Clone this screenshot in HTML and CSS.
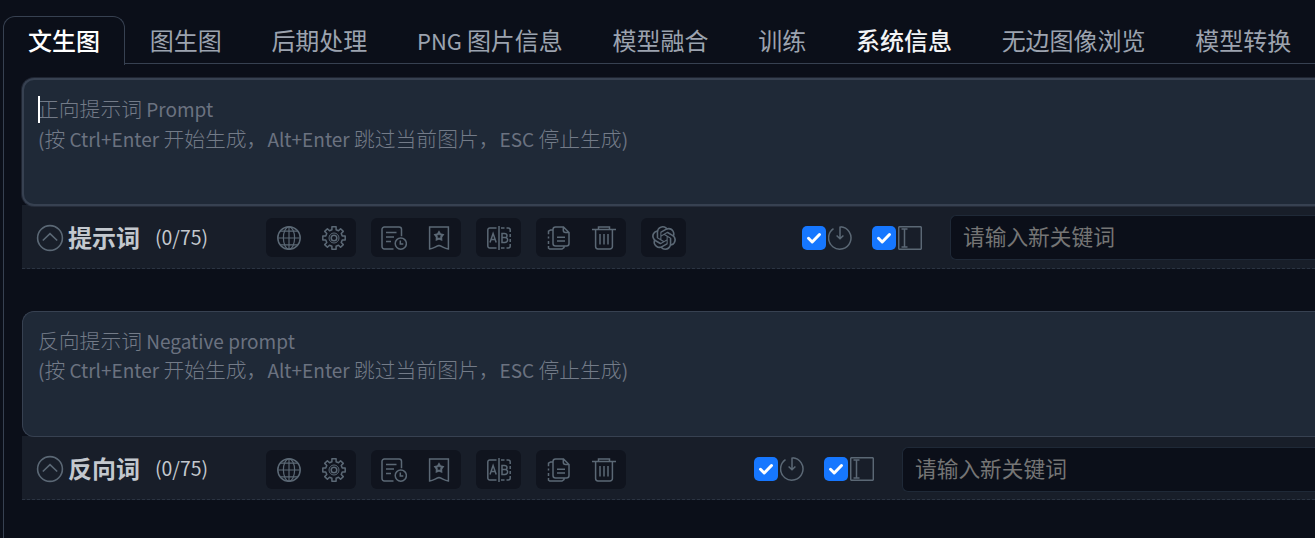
FILE: index.html
```html
<!DOCTYPE html>
<html lang="zh-CN">
<head>
    <meta charset="utf-8">
    <title>文生图</title>
    <link rel="stylesheet" href="styles.css">
</head>
<body>
<!-- 图标 -->
<svg class="icon-defs" xmlns="http://www.w3.org/2000/svg">
    <symbol id="i-fold" viewBox="0 0 28 28"><circle cx="14" cy="14" r="12.4"/><path d="M6.8 16.5L14 9.6l7.2 6.9"/></symbol>
    <symbol id="i-globe" viewBox="0 0 24 24"><circle cx="12" cy="12" r="11.2"/><path d="M12 .8v22.4M.8 12h22.4M3.4 5.2h17.2M3.4 18.8h17.2" stroke-width="1.2"/><ellipse cx="12" cy="12" rx="5.6" ry="11.2" stroke-width="1.2"/></symbol>
    <symbol id="i-gear" viewBox="0 0 24 24"><path d="M9.9.8h4.2v3l2.4 1 2.1-2.1 2.7 2.7-2.1 2.1 1 2.4h3v4.2h-3l-1 2.4 2.1 2.1-2.7 2.7-2.1-2.1-2.4 1v3H9.9v-3l-2.4-1-2.1 2.1-2.7-2.7 2.1-2.1-1-2.4h-3V9.9h3l1-2.4-2.1-2.1 2.7-2.7 2.1 2.1 2.4-1z" stroke-linejoin="round"/><circle cx="12" cy="12" r="5" stroke-width="1"/><circle cx="12" cy="12" r="2.8"/></symbol>
    <symbol id="i-history" viewBox="0 0 26 24"><path d="M12.5 22.9H3.3a2.3 2.3 0 0 1-2.3-2.3V3.3A2.3 2.3 0 0 1 3.3 1h14.900a2.300 2.300 0 0 1 2.300 2.300v7M5 6.500h10.500M5 11h8M5 15.500h5"/><circle cx="19.800" cy="17.600" r="5.600"/><path d="M19.300 14.500v3.600h3"/></symbol>
    <symbol id="i-favorite" viewBox="0 0 24 24"><path d="M2.6 1h18.8v22c-4-.4-6-2.6-9.4-3.4-3.4.8-5.4 3-9.4 3.4z"/><path d="M12 6.200l1.200 2.100 2.500.6-1.500 2 .1 2.500-2.300-.9-2.300.9.1-2.500-1.500-2 2.500-.6z" stroke-width="2"/></symbol>
    <symbol id="i-ab" viewBox="0 0 24 24"><path d="M9.5 2H2.8A2 2 0 0 0 .8 4v16a2 2 0 0 0 2 2h6.7M12 0v24"/><path d="M14 2h3.5M19.5 2h1.7a2 2 0 0 1 2 2v2M23.2 8v3M23.2 13v3M23.2 18v2a2 2 0 0 1-2 2h-1.7M14 22h3.5"/><path d="M3 16.5l3.1-9 3.1 9M4.1 13.4h4M15 7.6v8.8h2.7c3.8 0 3.8-4.8.4-4.8H15h2.7c3.3 0 3-4-.3-4z"/></symbol>
    <symbol id="i-copy" viewBox="0 0 24 24"><path d="M8.5 1h8L22 6.5v11a2.5 2.5 0 0 1-2.5 2.500h-11A2.500 2.500 0 0 1 6 17.500v-14A2.500 2.500 0 0 1 8.500 1zM16.300 1v3.300A2.200 2.200 0 0 0 18.500 6.500H22M10 11.300h8M10 15h8"/><path d="M6 4H3.500L1.500 5.200v3M1.500 10.500v2M1.500 15v3M1.500 20v2.200l1.200.8H15l2-1.500V20"/></symbol>
    <symbol id="i-trash" viewBox="0 0 24 24"><path d="M0 3.600h24M6.500 3.400V1h11v2.400M3.600 4v16.500A2.400 2.400 0 0 0 6 22.900h12a2.400 2.400 0 0 0 2.400-2.400V4M8 8v10.500M12 8v10.500M16 8v10.500"/></symbol>
    <symbol id="i-openai" viewBox="0 0 24 24"><path class="solid" d="M22.282 9.821a5.985 5.985 0 0 0-.516-4.910 6.046 6.046 0 0 0-6.510-2.900A6.065 6.065 0 0 0 4.981 4.182a5.985 5.985 0 0 0-3.998 2.900 6.046 6.046 0 0 0 .743 7.097 5.980 5.980 0 0 0 .511 4.911 6.051 6.051 0 0 0 6.515 2.900A5.985 5.985 0 0 0 13.260 24a6.056 6.056 0 0 0 5.772-4.206 5.990 5.990 0 0 0 3.998-2.900 6.056 6.056 0 0 0-.748-7.073zM13.260 22.430a4.476 4.476 0 0 1-2.877-1.040l.142-.081 4.779-2.758a.795.795 0 0 0 .392-.681v-6.737l2.020 1.169a.071.071 0 0 1 .038.052v5.583a4.504 4.504 0 0 1-4.494 4.493zM3.600 18.304a4.471 4.471 0 0 1-.535-3.014l.142.085 4.783 2.759a.771.771 0 0 0 .781 0l5.843-3.369v2.332a.080.080 0 0 1-.033.062L9.740 19.950a4.500 4.500 0 0 1-6.140-1.646zM2.341 7.896a4.485 4.485 0 0 1 2.366-1.973V11.600a.766.766 0 0 0 .388.677l5.814 3.354-2.020 1.169a.076.076 0 0 1-.071 0l-4.830-2.787A4.504 4.504 0 0 1 2.341 7.896zm16.596 3.856l-5.833-3.388 2.015-1.164a.076.076 0 0 1 .071 0l4.830 2.791a4.494 4.494 0 0 1-.676 8.105v-5.678a.790.790 0 0 0-.407-.666zm2.010-3.023l-.142-.085-4.773-2.782a.776.776 0 0 0-.785 0L9.409 9.230V6.897a.066.066 0 0 1 .028-.061l4.830-2.787a4.499 4.499 0 0 1 6.680 4.660zm-12.640 4.135l-2.020-1.164a.080.080 0 0 1-.038-.057V6.075a4.499 4.499 0 0 1 7.376-3.454l-.142.081-4.778 2.758a.795.795 0 0 0-.393.681zm1.097-2.366l2.602-1.500 2.607 1.500v2.999l-2.597 1.500-2.607-1.500z"/></symbol>
    <symbol id="i-import" viewBox="0 0 24 24"><path d="M5.500 2.700a11.200 11.200 0 1 0 7-1.900M12 .5v12M8.600 9.500l3.400 3.300 3.400-3.300"/></symbol>
    <symbol id="i-cursor" viewBox="0 0 24 24"><rect x=".7" y=".7" width="22.600" height="22.600" rx="1"/><path d="M3.500 3h6M3.500 21h6M6.500 3v18"/></symbol>
    <symbol id="i-check" viewBox="0 0 24 24"><path d="M6.500 12.300l3.700 3.700 7.300-7.500"/></symbol>
</svg>

<div class="tabs">
    <div class="tab selected">文生图</div>
    <div class="tab">图生图</div>
    <div class="tab">后期处理</div>
    <div class="tab"><span class="en">PNG </span>图片信息</div>
    <div class="tab">模型融合</div>
    <div class="tab">训练</div>
    <div class="tab strong">系统信息</div>
    <div class="tab">无边图像浏览</div>
    <div class="tab">模型转换</div>
</div>

<div class="tab-panel">
    <div class="prompt focus">
        <div class="textarea"><i class="caret"></i>正向提示词<span class="en"> Prompt</span><br><span class="en">(</span>按<span class="en"> Ctrl+Enter </span>开始生成，<span class="en">Alt+Enter </span>跳过当前图片，<span class="en">ESC </span>停止生成<span class="en">)</span></div>
        <div class="toolbar">
            <svg class="fold"><use href="#i-fold"/></svg>
            <div class="title">提示词</div>
            <div class="counter">(0/75)</div>
            <div class="groups">
                <div class="group"><span><svg><use href="#i-globe"/></svg></span><span><svg><use href="#i-gear"/></svg></span></div>
                <div class="group"><span><svg class="wide"><use href="#i-history"/></svg></span><span><svg><use href="#i-favorite"/></svg></span></div>
                <div class="group"><span><svg><use href="#i-ab"/></svg></span></div>
                <div class="group"><span><svg><use href="#i-copy"/></svg></span><span><svg><use href="#i-trash"/></svg></span></div>
                <div class="group"><span><svg><use href="#i-openai"/></svg></span></div>
            </div>
            <div class="options">
                <div class="option"><svg class="checkbox"><use href="#i-check"/></svg><svg><use href="#i-import"/></svg></div>
                <div class="option"><svg class="checkbox"><use href="#i-check"/></svg><svg><use href="#i-cursor"/></svg></div>
            </div>
            <div class="keyword">请输入新关键词</div>
        </div>
    </div>

    <div class="prompt negative">
        <div class="textarea">反向提示词<span class="en"> Negative prompt</span><br><span class="en">(</span>按<span class="en"> Ctrl+Enter </span>开始生成，<span class="en">Alt+Enter </span>跳过当前图片，<span class="en">ESC </span>停止生成<span class="en">)</span></div>
        <div class="toolbar">
            <svg class="fold"><use href="#i-fold"/></svg>
            <div class="title">反向词</div>
            <div class="counter">(0/75)</div>
            <div class="groups">
                <div class="group"><span><svg><use href="#i-globe"/></svg></span><span><svg><use href="#i-gear"/></svg></span></div>
                <div class="group"><span><svg class="wide"><use href="#i-history"/></svg></span><span><svg><use href="#i-favorite"/></svg></span></div>
                <div class="group"><span><svg><use href="#i-ab"/></svg></span></div>
                <div class="group"><span><svg><use href="#i-copy"/></svg></span><span><svg><use href="#i-trash"/></svg></span></div>
            </div>
            <div class="options">
                <div class="option"><svg class="checkbox"><use href="#i-check"/></svg><svg><use href="#i-import"/></svg></div>
                <div class="option"><svg class="checkbox"><use href="#i-check"/></svg><svg><use href="#i-cursor"/></svg></div>
            </div>
            <div class="keyword">请输入新关键词</div>
        </div>
    </div>
</div>
</body>
</html>
```
FILE: styles.css
```css
*{box-sizing: border-box;}
body{margin: 0;padding: 16px 0 0 3px;height: 538px;overflow: hidden;background: #0b0f19;color: #9ca3af;font-family: "Noto Sans CJK SC", sans-serif;}
svg{display: block;width: 24px;height: 24px;flex: none;fill: none;stroke: #5b6875;stroke-width: 1.5;overflow: visible;}
.solid{fill: #5b6875;stroke: none;}
.icon-defs{position: absolute;width: 0;height: 0;}
.en{font-size: .915em;font-weight: 400;}

/* 顶部标签 */
.tabs{display: flex;height: 48px;border-bottom: 1px solid #374151;white-space: nowrap;}
.tab{flex: none;height: 49px;padding: 0 24px 0 23.7px;border: 1px solid transparent;border-bottom: 0;font-size: 24px;line-height: 46px;}
.tab:last-child{padding-right: 0;}
.tab.selected{padding: 0 24px;border-color: #374151;border-radius: 12px 12px 0 0;background: #0b0f19;color: #fff;font-weight: 500;}
.tab.strong{color: #f3f4f6;font-weight: 500;}

.tab-panel{height: 474px;padding: 14px 0 0 18px;border-left: 1px solid #374151;}
.prompt.negative{margin-top: 42px;}

.textarea{position: relative;z-index: 1;height: 126px;padding: 14px 0 0 15px;border: 1px solid #374151;border-right: 0;border-radius: 12px 0 0 12px;background: #1f2937;color: #737b88;font-size: 20.8px;line-height: 29.3px;font-weight: 300;white-space: nowrap;}
.textarea .en{color: #6b7280;}
.focus .textarea{height: 128px;border-width: 2px 0 2px 2px;padding: 14.4px 0 0 14px;box-shadow: 0 0 0 1px rgba(55,65,81,.45);}
.caret{position: absolute;left: 14px;top: 16px;width: 2px;height: 27px;background: #fff;}

/* 工具栏 */
.toolbar{display: flex;align-items: center;height: 64px;margin-top: -1px;padding: 2px 0 0 14px;border-bottom: 1px dashed #2b3442;background: #181e29;}
.negative .toolbar{padding-top: 4px;}
.fold{width: 28px;height: 28px;stroke-width: 1.6;}
.title{width: 72px;margin: 0 0 2px 4px;color: #c3c8ce;font-size: 24px;line-height: 36px;font-weight: 700;}
.counter{width: 53px;margin: 0 0 1px 15px;color: #c3c8ce;font-size: 19.4px;line-height: 30px;}
.groups{display: flex;gap: 15px;margin-left: 58px;}
.group{display: flex;height: 39px;border-radius: 6px;background: #10141e;}
.group span{display: flex;align-items: center;justify-content: center;width: 45px;}
.group .wide{width: 26px;}
.options{display: flex;gap: 20px;margin-left: 116px;}
.negative .options{margin: 0 0 2px 128px;}
.negative .fold{margin-bottom: 2px;}
.negative .title{margin-bottom: 4px;}
.negative .counter{margin-bottom: 3px;}
.option{display: flex;gap: 2px;}
.checkbox{border-radius: 5px;background: #1677ff;stroke: #fff;stroke-width: 3;stroke-linecap: round;stroke-linejoin: round;}
.keyword{flex: 1;height: 45px;margin-left: 28px;padding-left: 12px;border: 1px solid #1f2937;border-right: 0;border-radius: 6px 0 0 6px;background: #0b0f19;color: #757575;font-size: 21.7px;line-height: 40px;}
```
